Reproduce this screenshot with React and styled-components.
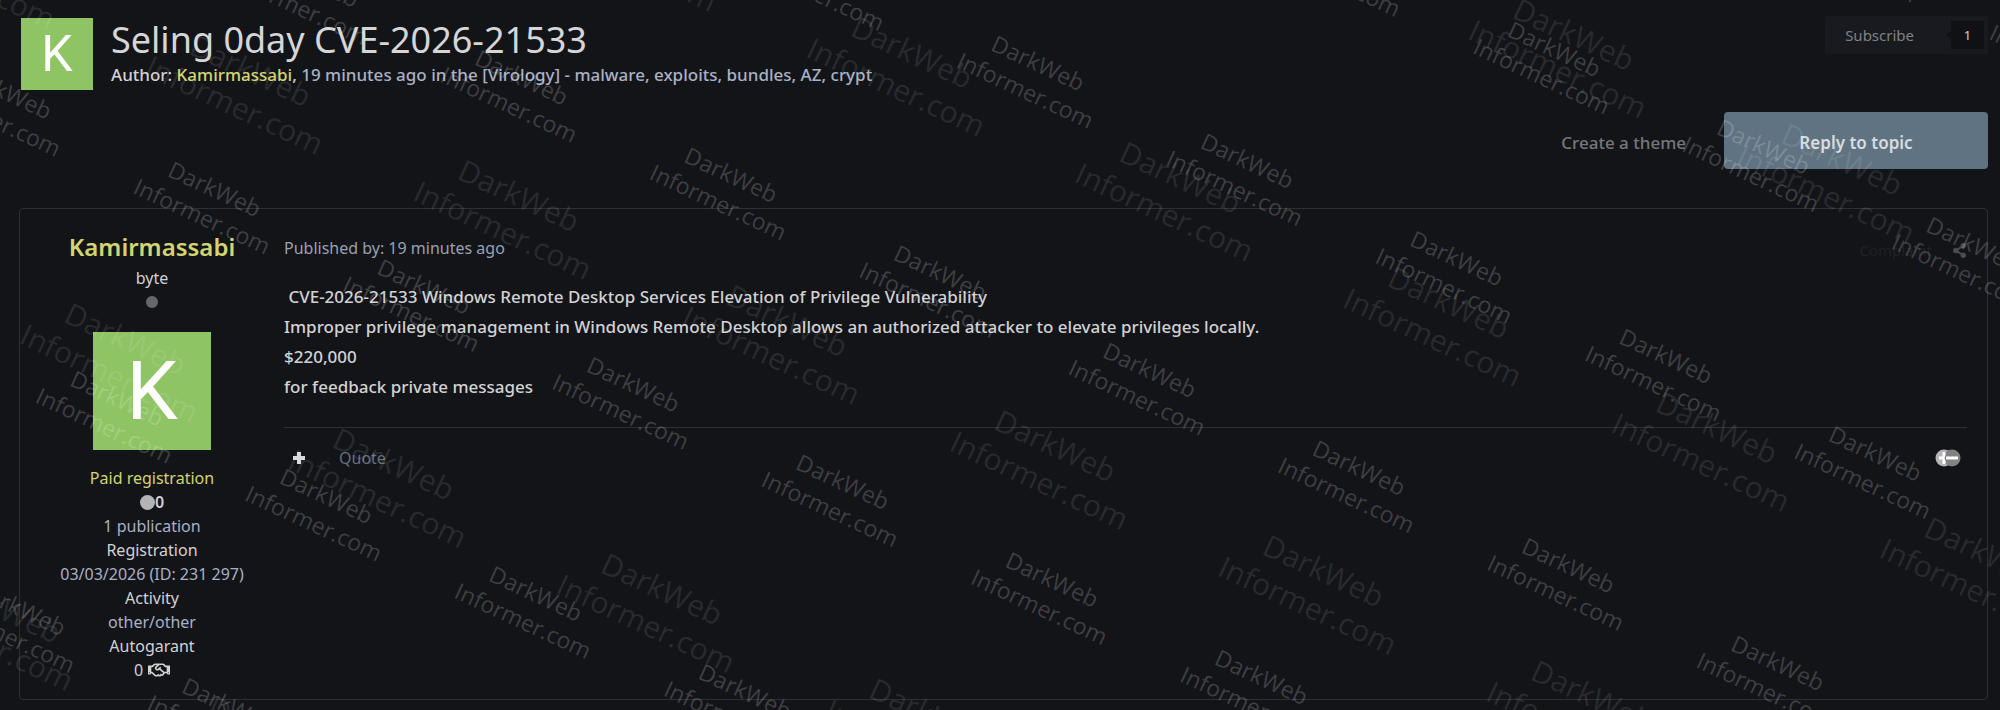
import React from 'react';
import styled, { createGlobalStyle } from 'styled-components';
import { FaRegHandshake, FaShareAlt } from 'react-icons/fa';

const GlobalStyle = createGlobalStyle`
  *, *::before, *::after {
    box-sizing: border-box;
  }

  body {
    margin: 0;
    background: #131418;
    color: #d2d2d3;
    font-family: 'Noto Sans', 'Open Sans', sans-serif;
    font-size: 16px;
    line-height: 24px;
  }

  button {
    font-family: inherit;
    cursor: pointer;
  }
`;

const Page = styled.div`
  position: relative;
  min-height: 100vh;
  overflow: hidden;
  padding: 16px 12px 8px 19px;
`;

// Topic header
const TopicHeader = styled.header`
  display: flex;
  align-items: flex-start;
`;

const Topic = styled.div`
  flex: 1;
  display: flex;
  gap: 18px;
  min-width: 0;
  padding: 2px 0 0 2px;
`;

const Avatar = styled.div`
  flex: none;
  display: flex;
  align-items: center;
  justify-content: center;
  width: ${(p) => p.$size}px;
  height: ${(p) => p.$size}px;
  background: #8fc464;
  color: #fff;
  font-family: Roboto, sans-serif;
  font-size: ${(p) => p.$fontSize}px;
  line-height: 1;
`;

const TopicInfo = styled.div`
  flex: 1;
  min-width: 0;
`;

const Title = styled.h1`
  margin: 0;
  color: #d6d6d7;
  font-size: 36px;
  font-weight: 400;
  line-height: 44px;
`;

const Byline = styled.p`
  margin: 0;
  color: #a9b1c4;
  font-size: 17px;
  font-weight: 500;
  line-height: 26px;

  span {
    color: #d2d2d3;
  }
`;

const UserLink = styled.a`
  color: #d3d56f;
  text-decoration: none;
`;

const SubscribeButton = styled.button`
  flex: none;
  display: flex;
  align-items: center;
  gap: 32px;
  height: 38px;
  padding: 0 4px 0 20px;
  border: 0;
  border-radius: 3px;
  background: #191a1f;
  color: #808184;
  font-size: 15px;
`;

const Counter = styled.span`
  display: flex;
  align-items: center;
  justify-content: center;
  width: 38px;
  height: 28px;
  padding-left: 5px;
  background: #101115;
  color: #d2d2d3;
  font-size: 13px;
  clip-path: polygon(5px 0, 100% 0, 100% 100%, 5px 100%, 5px 64%, 0 50%, 5px 36%);
`;

const TopicActions = styled.div`
  display: flex;
  justify-content: flex-end;
  align-items: center;
  gap: 38px;
  margin: 22px 0 39px;
`;

const CreateLink = styled.a`
  padding-top: 4px;
  color: #77777a;
  font-size: 17px;
  font-weight: 500;
  text-decoration: none;
`;

const ReplyButton = styled.button`
  width: 264px;
  height: 57px;
  padding: 4px 0 0;
  border: 0;
  border-radius: 4px;
  background: #607382;
  color: #d9dcdf;
  font-size: 17px;
  font-weight: 600;
`;

// Post
const Post = styled.article`
  display: flex;
  gap: 20px;
  min-height: 492px;
  padding: 23px 20px 16px;
  border: 1px solid #2f3033;
  border-radius: 4px;
`;

const Author = styled.aside`
  flex: none;
  display: flex;
  flex-direction: column;
  align-items: center;
  width: 224px;
  text-align: center;
`;

const AuthorName = styled.h2`
  margin: 0;
  font-size: 24px;
  font-weight: 600;
  line-height: 30px;
`;

const Rank = styled.div`
  margin-top: 4px;
  font-size: 16px;
  line-height: 24px;
`;

const StatusDot = styled.span`
  width: 12px;
  height: 12px;
  margin: 6px 0 24px;
  border-radius: 50%;
  background: #66676a;
`;

const Details = styled.div`
  display: flex;
  flex-direction: column;
  align-items: center;
  margin-top: 16px;
`;

const Detail = styled.div`
  display: flex;
  align-items: center;
  gap: 5px;
  height: 24px;
  color: ${(p) => p.$color || '#d2d2d3'};
  font-size: 16px;
`;

const Reputation = styled(Detail)`
  gap: 0;
  font-weight: 600;

  &::before {
    content: '';
    width: 15px;
    height: 15px;
    border-radius: 50%;
    background: #b4b4b5;
  }
`;

const PostBody = styled.div`
  flex: 1;
  min-width: 0;
`;

const PostHeader = styled.div`
  display: flex;
  justify-content: space-between;
  align-items: center;
  height: 32px;
  color: #98a1b3;
  font-size: 16px;
`;

const PostTools = styled.div`
  display: flex;
  align-items: center;
  gap: 20px;
  padding-top: 4px;

  button {
    display: flex;
    padding: 0;
    border: 0;
    background: none;
    color: #202125;
    font-size: 15px;
  }

  button:last-child {
    color: #4b4c50;
  }
`;

const PostText = styled.div`
  padding: 18px 0 25px;
  color: #d2d2d3;
  font-size: 17px;
  font-weight: 500;
  line-height: 30px;
  white-space: pre-wrap;

  p {
    margin: 0;
  }
`;

const PostFooter = styled.div`
  display: flex;
  align-items: center;
  gap: 34px;
  padding: 19px 6px 0 9px;
  border-top: 1px solid #2f3033;

  button {
    display: flex;
    padding: 0;
    border: 0;
    background: none;
    color: #d9d9da;
    font-size: 16px;
  }

  button:nth-child(2) {
    color: #65717d;
  }

  button:last-child {
    margin-left: auto;
  }
`;

// Watermark: square grid of labels, turned as one sheet
const WatermarkLayer = styled.div`
  position: absolute;
  inset: 0;
  overflow: hidden;
  pointer-events: none;
  user-select: none;
`;

const WatermarkSheet = styled.div`
  position: absolute;
  left: ${(p) => p.$left}px;
  top: ${(p) => p.$top}px;
  display: grid;
  grid-template-columns: repeat(${(p) => p.$cols}, ${(p) => p.$cell}px);
  grid-auto-rows: ${(p) => p.$cell}px;
  place-items: center;
  transform: rotate(25deg);
  transform-origin: ${(p) => -p.$left}px ${(p) => -p.$top}px;
  color: ${(p) => p.$color};
  font-family: 'Open Sans', sans-serif;
  font-size: ${(p) => p.$fontSize}px;
  font-weight: 500;
  line-height: ${(p) => p.$lineHeight}px;
  text-align: center;
`;

const Watermark = ({ cols, rows, ...sheet }) => (
  <WatermarkSheet $cols={cols} {...sheet}>
    {Array.from({ length: cols * rows }, (_, i) => (
      <div key={i}>
        DarkWeb
        <br />
        Informer.com
      </div>
    ))}
  </WatermarkSheet>
);

const PlusIcon = () => (
  <svg width="12" height="14" viewBox="0 0 12 14" aria-hidden="true">
    <path d="M6 1v12M0 7h12" stroke="currentColor" strokeWidth="4" />
  </svg>
);

const ReactionsIcon = () => (
  <svg width="26" height="18" viewBox="0 0 26 18" aria-hidden="true">
    <circle cx="9" cy="9" r="8.5" fill="#b5b5b6" />
    <path d="M9 3v12M4 9h7" stroke="#fff" strokeWidth="3" />
    <circle cx="17" cy="9" r="8.5" fill="#828283" />
    <path d="M10 4L8.500 9L10 14" stroke="#fff" strokeWidth="2" fill="none" />
    <path d="M11 9h12" stroke="#fff" strokeWidth="3" />
  </svg>
);

export default function App() {
  return (
    <Page>
      <GlobalStyle />
      <TopicHeader>
        <Topic>
          <Avatar $size={72} $fontSize={50}>K</Avatar>
          <TopicInfo>
            <Title>Seling 0day CVE-2026-21533</Title>
            <Byline>
              <span>Author: </span>
              <UserLink href="#user">Kamirmassabi</UserLink>
              <span>,</span> 19 minutes ago in the [Virology] - malware, exploits, bundles, AZ, crypt
            </Byline>
          </TopicInfo>
        </Topic>
        <SubscribeButton type="button">
          Subscribe <Counter>1</Counter>
        </SubscribeButton>
      </TopicHeader>

      <TopicActions>
        <CreateLink href="#create">Create a theme</CreateLink>
        <ReplyButton type="button">Reply to topic</ReplyButton>
      </TopicActions>

      <Post>
        <Author>
          <AuthorName>
            <UserLink href="#user">Kamirmassabi</UserLink>
          </AuthorName>
          <Rank>byte</Rank>
          <StatusDot />
          <Avatar $size={118} $fontSize={82}>K</Avatar>
          <Details>
            <Detail $color="#d3d56f">Paid registration</Detail>
            <Reputation>0</Reputation>
            <Detail $color="#a9b1c4">1 publication</Detail>
            <Detail>Registration</Detail>
            <Detail $color="#a9b1c4">03/03/2026 (ID: 231 297)</Detail>
            <Detail>Activity</Detail>
            <Detail $color="#a9b1c4">other/other</Detail>
            <Detail>Autogarant</Detail>
            <Detail>
              0 <FaRegHandshake size={22} />
            </Detail>
          </Details>
        </Author>

        <PostBody>
          <PostHeader>
            <span>Published by: 19 minutes ago</span>
            <PostTools>
              <button type="button">Complaint</button>
              <button type="button" aria-label="Share">
                <FaShareAlt />
              </button>
            </PostTools>
          </PostHeader>
          <PostText>
            <p>{' CVE-2026-21533 Windows Remote Desktop Services Elevation of Privilege Vulnerability'}</p>
            <p>Improper privilege management in Windows Remote Desktop allows an authorized attacker to elevate privileges locally.</p>
            <p>$220,000</p>
            <p>for feedback private messages</p>
          </PostText>
          <PostFooter>
            <button type="button" aria-label="Multiquote">
              <PlusIcon />
            </button>
            <button type="button">Quote</button>
            <button type="button" aria-label="Reactions">
              <ReactionsIcon />
            </button>
          </PostFooter>
        </PostBody>
      </Post>

      <WatermarkLayer aria-hidden="true">
        <Watermark
          cols={8}
          rows={5}
          $cell={296}
          $left={-187}
          $top={-763}
          $fontSize={30}
          $lineHeight={38}
          $color="rgba(255, 255, 255, 0.1)"
        />
        <Watermark
          cols={11}
          rows={7}
          $cell={231}
          $left={-303}
          $top={-945}
          $fontSize={23}
          $lineHeight={30}
          $color="rgba(255, 255, 255, 0.19)"
        />
      </WatermarkLayer>
    </Page>
  );
}
